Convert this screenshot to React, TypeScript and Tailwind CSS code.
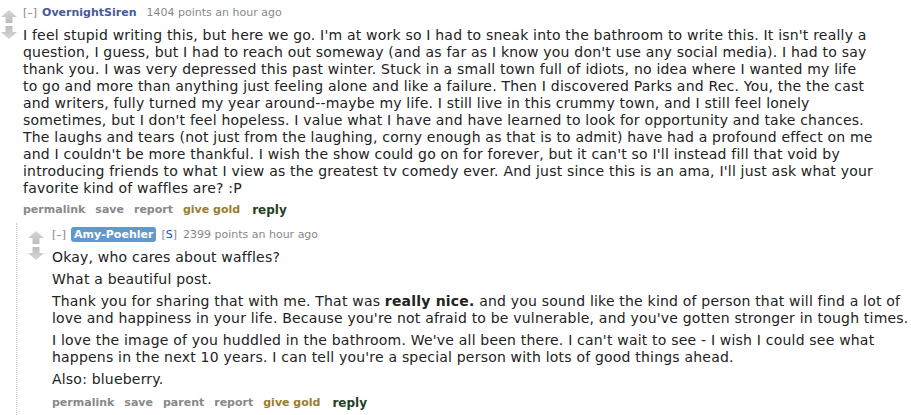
import React from 'react';

const verdana = { fontFamily: '"DejaVu Sans", Verdana, sans-serif' };

const parentLines = [
    "I feel stupid writing this, but here we go. I'm at work so I had to sneak into the bathroom to write this. It isn't really a",
    "question, I guess, but I had to reach out someway (and as far as I know you don't use any social media). I had to say",
    'thank you. I was very depressed this past winter. Stuck in a small town full of idiots, no idea where I wanted my life',
    'to go and more than anything just feeling alone and like a failure. Then I discovered Parks and Rec. You, the the cast',
    'and writers, fully turned my year around--maybe my life. I still live in this crummy town, and I still feel lonely',
    "sometimes, but I don't feel hopeless. I value what I have and have learned to look for opportunity and take chances.",
    'The laughs and tears (not just from the laughing, corny enough as that is to admit) have had a profound effect on me',
    "and I couldn't be more thankful. I wish the show could go on for forever, but it can't so I'll instead fill that void by",
    "introducing friends to what I view as the greatest tv comedy ever. And just since this is an ama, I'll just ask what your",
    'favorite kind of waffles are? :P',
];

function Arrow({ down = false }: { down?: boolean }) {
    return (
        <svg width="16" height="13" viewBox="0 0 16 13" className={down ? 'rotate-180' : ''}>
            <defs>
                <linearGradient id={down ? 'gd' : 'gu'} x1="0" y1="0" x2="0" y2="1">
                    <stop offset="0" stopColor="#d6d6d6" />
                    <stop offset="1" stopColor="#bdbdbd" />
                </linearGradient>
            </defs>
            <polygon points="8,0 16,7 11.5,7 11.5,13 4.5,13 4.5,7 0,7" fill={`url(#${down ? 'gd' : 'gu'})`} />
        </svg>
    );
}

function Votes({ top }: { top: string }) {
    return (
        <div className={`flex flex-col items-center gap-[3px] w-[16px] shrink-0 ${top}`}>
            <Arrow />
            <Arrow down />
        </div>
    );
}

function Buttons({ parent = false }: { parent?: boolean }) {
    return (
        <div className={`flex gap-[10px] text-[11px] font-bold leading-[14px] ${parent ? 'mt-[8px]' : 'mt-[6px]'}`}>
            <span className="text-[#888]">permalink</span>
            <span className="text-[#888]">save</span>
            {parent && <span className="text-[#888]">parent</span>}
            <span className="text-[#888]">report</span>
            <span className="text-[#9a7d2e]">give gold</span>
            <span className="text-[#1f3f1f] text-[12px] ml-[2px]">reply</span>
        </div>
    );
}

export default function App() {
    return (
        <div className="bg-white w-[911px] h-[415px] overflow-hidden text-[#222]" style={verdana}>
            {/* parent comment */}
            <div className="flex gap-[6px] pl-[1px] pt-[3px]">
                <Votes top="pt-[7px]" />
                <div className="flex-1">
                    <div className="text-[11px] leading-[20px] text-[#888]">
                        <span>[–]</span>
                        <span className="font-bold text-[#465a9a] ml-[5px]">OvernightSiren</span>
                        <span className="ml-[10px]">1404 points an hour ago</span>
                    </div>
                    <p className="text-[14px] leading-[17px] tracking-[0.2px] text-[#222] mt-[4px]">
                        {parentLines.map((line, i) => (
                            <React.Fragment key={i}>
                                {line}
                                {i < parentLines.length - 1 && <br />}
                            </React.Fragment>
                        ))}
                    </p>
                    <Buttons />
                </div>
            </div>

            {/* child comment */}
            <div className="ml-[16px] mt-[6px] border-l border-dotted border-[#c8c8e8] pl-[11px] pr-[2px] flex gap-[8px] pt-[2px] h-[200px]">
                <Votes top="pt-[6px]" />
                <div className="flex-1">
                    <div className="text-[11px] leading-[20px] text-[#888]">
                        <span>[–]</span>
                        <span className="font-bold text-white bg-[#5f99cf] rounded-[3px] px-[3px] py-[1px] ml-[5px]">Amy-Poehler</span>
                        <span className="ml-[5px] text-[#888]">[<span className="text-[#0055df]">S</span>]</span>
                        <span className="ml-[6px]">2399 points an hour ago</span>
                    </div>
                    <div className="text-[14px] leading-[17px] tracking-[0.2px] text-[#222] mt-[4px] flex flex-col gap-[5px]">
                        <p>Okay, who cares about waffles?</p>
                        <p>What a beautiful post.</p>
                        <p>
                            Thank you for sharing that with me. That was <strong>really nice.</strong> and you sound like the kind of person that will find a lot of love and happiness in your life. Because you're not afraid to be vulnerable, and you've gotten stronger in tough times.
                        </p>
                        <p>
                            I love the image of you huddled in the bathroom. We've all been there. I can't wait to see - I wish I could see what happens in the next 10 years. I can tell you're a special person with lots of good things ahead.
                        </p>
                        <p>Also: blueberry.</p>
                    </div>
                    <Buttons parent />
                </div>
            </div>
        </div>
    );
}
